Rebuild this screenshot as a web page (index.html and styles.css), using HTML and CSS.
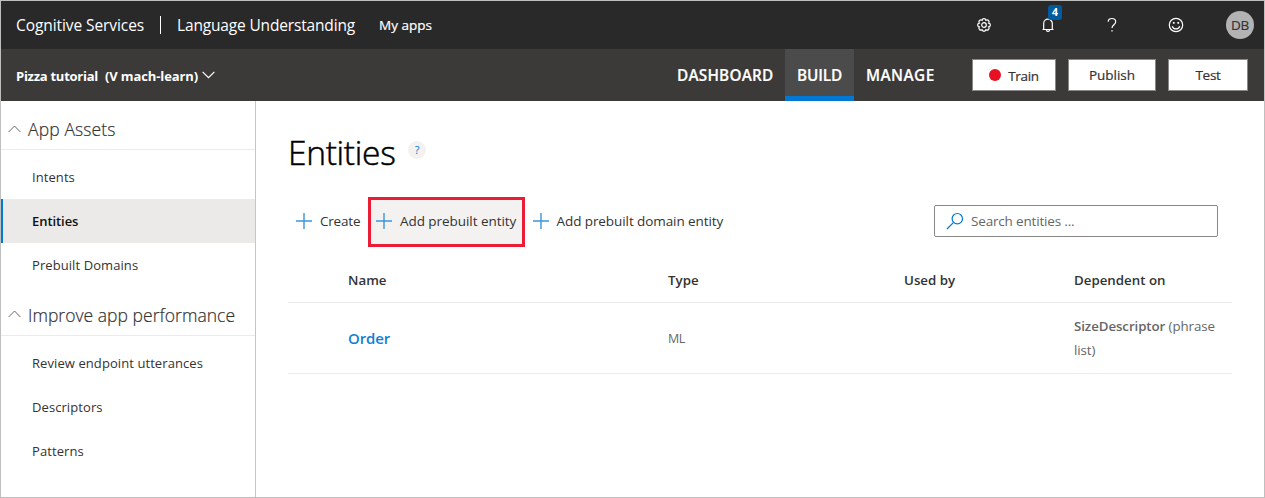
FILE: index.html
```html
<!DOCTYPE html>
<html lang="en">
<head>
<meta charset="utf-8">
<title>Language Understanding - Entities</title>
<link rel="stylesheet" href="styles.css">
</head>
<body>
<div class="app">
  <header class="topbar">
    <span class="brand">Cognitive Services</span>
    <span class="divider"></span>
    <span class="product">Language Understanding</span>
    <a class="my-apps">My apps</a>
    <div class="tools">
      <svg class="icon gear" width="16" height="16" viewBox="0 0 16 16"><path d="M6.050 3.290A1.980 1.980 0 0 1 9.950 3.290A1.980 1.980 0 0 1 12.710 6.050A1.980 1.980 0 0 1 12.710 9.950A1.980 1.980 0 0 1 9.950 12.710A1.980 1.980 0 0 1 6.050 12.710A1.980 1.980 0 0 1 3.290 9.950A1.980 1.980 0 0 1 3.290 6.050A1.980 1.980 0 0 1 6.050 3.290z"/><circle cx="8" cy="8" r="2.300"/></svg>
      <span class="bell">
        <svg class="icon" width="14" height="16" viewBox="0 0 14 16"><path d="M1.500 12.500h11M2.700 12.500V6.500a4.300 4.300 0 0 1 8.600 0v6M5.400 12.800a1.600 1.600 0 0 0 3.200 0"/></svg>
        <span class="badge">4</span>
      </span>
      <svg class="icon" width="10" height="16" viewBox="0 0 10 16"><path d="M1.200 4.700C1.200 2.600 2.700 1.500 4.900 1.500s3.800 1.200 3.800 3.200c0 2.900-3.700 3.100-3.700 6.300"/><path d="M4.300 13.800h1.400"/></svg>
      <svg class="icon smile" width="16" height="16" viewBox="0 0 16 16"><circle cx="8" cy="8" r="6.700"/><path d="M4.200 9.200c.6 1.700 2 2.700 3.800 2.700s3.200-1 3.800-2.700"/><path class="eyes" d="M4.900 5h1.700v1.700H4.900zM9.400 5h1.700v1.700H9.400z"/></svg>
      <span class="avatar">DB</span>
    </div>
  </header>
  <nav class="appbar">
    <div class="app-name"><span class="name">Pizza tutorial</span><span class="version">(V mach-learn)</span>
      <svg class="chevron" width="13" height="8" viewBox="0 0 13 8"><path d="M.6.8l5.900 5.900L12.400.8"/></svg>
    </div>
    <div class="tabs">
      <a class="tab">DASHBOARD</a>
      <a class="tab active">BUILD</a>
      <a class="tab">MANAGE</a>
    </div>
    <div class="actions">
      <button class="btn train"><span class="dot"></span>Train</button>
      <button class="btn publish">Publish</button>
      <button class="btn test">Test</button>
    </div>
  </nav>
  <div class="body">
    <aside class="sidebar">
      <h2 class="group assets"><svg class="caret" width="13" height="8" viewBox="0 0 13 8"><path d="M.6 7l5.900-6L12.400 7"/></svg>App Assets</h2>
      <ul class="links">
        <li class="link">Intents</li>
        <li class="link current">Entities</li>
        <li class="link">Prebuilt Domains</li>
      </ul>
      <h2 class="group perf"><svg class="caret" width="13" height="8" viewBox="0 0 13 8"><path d="M.6 7l5.900-6L12.400 7"/></svg>Improve app performance</h2>
      <ul class="links">
        <li class="link">Review endpoint utterances</li>
        <li class="link">Descriptors</li>
        <li class="link">Patterns</li>
      </ul>
    </aside>
    <main class="main">
      <div class="title-row"><h1 class="title">Entities</h1><span class="help">?</span></div>
      <div class="toolbar">
        <button class="cmd create"><svg class="plus" width="16" height="16" viewBox="0 0 16 16"><path d="M8 0v16M0 8h16"/></svg>Create</button>
        <button class="cmd selected"><svg class="plus" width="16" height="16" viewBox="0 0 16 16"><path d="M8 0v16M0 8h16"/></svg>Add prebuilt entity</button>
        <button class="cmd domain"><svg class="plus" width="16" height="16" viewBox="0 0 16 16"><path d="M8 0v16M0 8h16"/></svg>Add prebuilt domain entity</button>
        <div class="search"><svg class="lens" width="18" height="18" viewBox="0 0 18 18"><circle cx="11.300" cy="6.700" r="5.200"/><path d="M7.600 10.400L1 17"/></svg>Search entities ...</div>
      </div>
      <div class="table">
        <div class="row head"><span>Name</span><span>Type</span><span>Used by</span><span>Dependent on</span></div>
        <div class="row entry"><a class="order">Order</a><span class="type">ML</span><span></span><span class="depends"><b class="phrase-name">SizeDescriptor</b> (phrase list)</span></div>
      </div>
    </main>
  </div>
</div>
</body>
</html>
```
FILE: styles.css
```css
* { box-sizing: border-box; }
body { margin: 0; font-family: "Open Sans", "Noto Sans", sans-serif; color: #333; background: #fff; }
h1, h2, ul { margin: 0; padding: 0; font-weight: 400; list-style: none; }
button { font: inherit; color: inherit; padding: 0; border: 0; background: none; }
svg { flex: none; fill: none; }

.app { width: 1265px; height: 498px; border: 1px solid #bfbfbf; display: flex; flex-direction: column; overflow: hidden; white-space: nowrap; }

.topbar { height: 48px; flex: none; background: #292929; color: #fff; display: flex; align-items: center; padding: 0 10px 0 15px; font-size: 15.5px; }
.brand { width: 144px; letter-spacing: -0.08px; }
.divider { width: 1px; height: 18px; background: #fff; }
.product { margin-left: 16px; width: 202px; letter-spacing: -0.16px; }
.my-apps { font-size: 13.5px; letter-spacing: 0.03px; -webkit-text-stroke: 0.2px #fff; }
.tools { margin-left: auto; display: flex; align-items: center; }
.icon { stroke: #fff; stroke-width: 1.2; display: block; }
.bell { position: relative; margin: 0 52px 0 49px; }
.badge { position: absolute; left: 7px; top: -12px; width: 14px; height: 15px; border-radius: 3px; background: #005a9e; font-size: 10.5px; line-height: 15px; font-weight: 700; text-align: center; }
.smile { margin-left: 51px; }
.eyes { fill: #fff; stroke: none; }
.avatar { margin-left: 42px; width: 28px; height: 28px; border-radius: 50%; background: #b3b3b3; color: #333; font-size: 13.5px; line-height: 29px; text-align: center; letter-spacing: -0.2px; -webkit-text-stroke: 0.2px #333; }

.appbar { height: 52px; flex: none; background: #3b3a39; color: #fff; display: flex; padding: 0 16px 0 15px; }
.app-name { display: flex; align-items: center; width: 649px; font-size: 13px; font-weight: 700; padding-top: 1px; }
.name { width: 89px; letter-spacing: -0.26px; }
.version { width: 97px; letter-spacing: -0.12px; }
.chevron { stroke: #fff; stroke-width: 1.2; margin-top: -2px; }
.tabs { display: flex; font-size: 15.3px; font-weight: 600; line-height: 53px; -webkit-text-stroke: 0.2px #fff; }
.tab { height: 52px; padding: 0 12px; letter-spacing: 0.22px; }
.tab:first-child { width: 120px; }
.tab.active { width: 69px; background: #4c4b4b; border-bottom: 5px solid #0078d4; letter-spacing: -0.1px; }
.tab:last-child { letter-spacing: 0.45px; }
.actions { margin-left: auto; display: flex; gap: 12px; padding-top: 10px; }
.btn { height: 32px; border: 1px solid #8a8886; background: #fff; color: #333; font-size: 13.5px; line-height: 30px; display: flex; justify-content: center; align-items: center; -webkit-text-stroke: 0.2px #333; }
.train { width: 84px; letter-spacing: -0.3px; padding-top: 1px; }
.publish { width: 88px; letter-spacing: 0; }
.test { width: 80px; letter-spacing: -0.3px; }
.dot { width: 12px; height: 12px; border-radius: 50%; background: #e81123; margin: -1px 7px 0 0; }

.body { flex: 1; display: flex; min-height: 0; }
.sidebar { width: 255px; flex: none; border-right: 1px solid #c8c6c4; }
.group { height: 49px; border-bottom: 1px solid #edebe9; display: flex; align-items: center; gap: 7.5px; padding: 8px 0 0 6.5px; font-size: 17.5px; font-weight: 300; letter-spacing: 0.13px; -webkit-text-stroke: 0.2px #333; }
.perf { height: 44px; padding-top: 2px; letter-spacing: 0.03px; }
.caret { stroke: #666; stroke-width: 1; margin-top: -1px; }
.links { padding: 5px 0; }
.link { height: 44px; line-height: 45px; padding-left: 31px; font-size: 13px; letter-spacing: 0.08px; }
.link.current { background: #ebeae9; border-left: 2px solid #0078d4; padding-left: 29px; font-weight: 600; color: #111; letter-spacing: -0.06px; }

.main { flex: 1; padding: 0 32px; }
.title-row { height: 96px; display: flex; align-items: center; padding-top: 6px; }
.title { font-size: 33.5px; line-height: 40px; font-weight: 300; color: #000; letter-spacing: -0.3px; width: 120px; -webkit-text-stroke: 0.5px #000; }
.help { width: 18px; height: 18px; border-radius: 50%; background: #f3f2f1; color: #0078d4; font-size: 11px; line-height: 18px; text-align: center; margin-top: -4px; }
.toolbar { display: flex; height: 50px; align-items: center; font-size: 13.5px; line-height: 16px; }
.cmd { display: flex; align-items: center; gap: 8px; padding-bottom: 2px; }
.plus { stroke: #3a96dd; stroke-width: 1.4; }
.create { width: 80px; padding-left: 8px; letter-spacing: -0.2px; }
.selected { width: 157px; height: 50px; border: 3px solid #eb1c36; background: #f3f2f1; padding-left: 5px; letter-spacing: -0.05px; }
.domain { padding-left: 7.5px; letter-spacing: -0.08px; }
.search { margin: -2px 14px 0 auto; width: 284px; height: 32px; border: 1px solid #8a8886; border-radius: 2px; display: flex; align-items: center; gap: 7px; padding-left: 11px; color: #666; letter-spacing: -0.17px; }
.lens { stroke: #0078d4; stroke-width: 1.2; }

.row { display: grid; grid-template-columns: 320px 236px 170px 158px; padding-left: 60px; align-items: center; border-bottom: 1px solid #edebe9; width: 944px; }
.head { height: 56px; padding-top: 11px; font-size: 13.3px; font-weight: 600; }
.entry { height: 71px; font-size: 13.3px; color: #666; }
.order { font-size: 15px; font-weight: 600; color: #1180d3; letter-spacing: -0.1px; }
.type { font-size: 12.5px; letter-spacing: -0.5px; }
.depends { line-height: 24px; white-space: normal; letter-spacing: -0.08px; }
.phrase-name { font-weight: 600; }
```
